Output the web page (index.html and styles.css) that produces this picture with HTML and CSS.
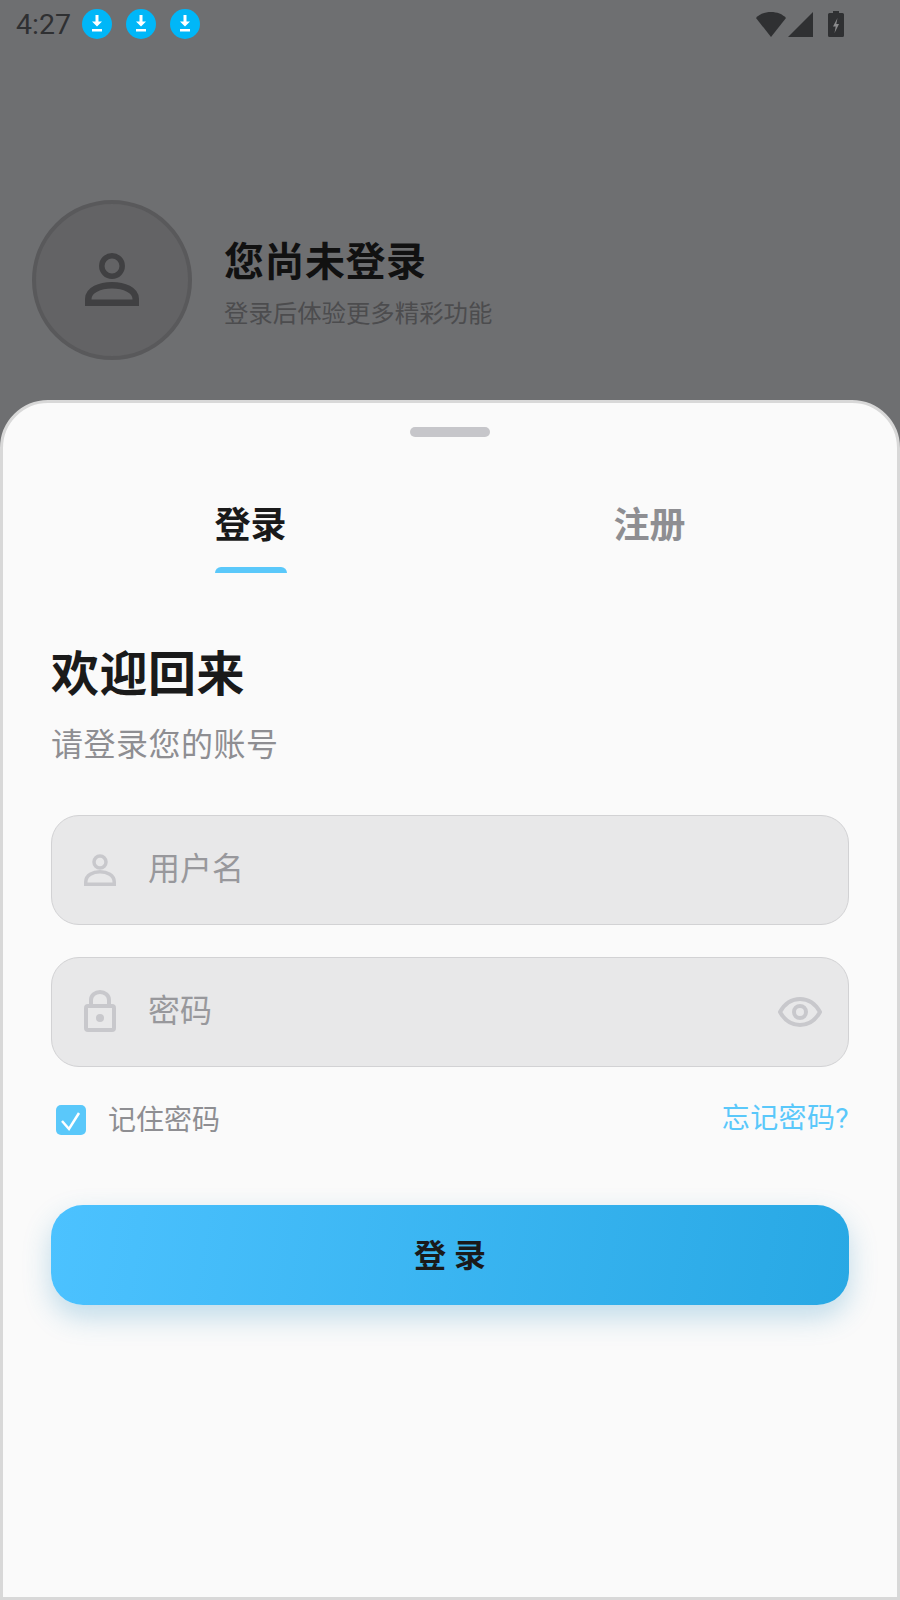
FILE: index.html
```html
<!DOCTYPE html>
<html lang="zh-CN">

<head>
	<meta charset="UTF-8" />
	<meta name="viewport" content="width=device-width, initial-scale=1.0" />
	<title>登录</title>
	<link rel="stylesheet" href="styles.css">
</head>

<body>
	<div class="page">
		<div class="status-bar">
			<span class="time">4:27</span>
			<span class="notice"><svg viewBox="0 0 30 30" width="30" height="30"><path d="M13.500 6h3v6.500H20L15 17.500 10 12.500h3.500z" fill="#fff" /><rect x="10" y="20" width="10" height="2.500" fill="#fff" /></svg></span>
			<span class="notice"><svg viewBox="0 0 30 30" width="30" height="30"><path d="M13.500 6h3v6.500H20L15 17.500 10 12.500h3.500z" fill="#fff" /><rect x="10" y="20" width="10" height="2.500" fill="#fff" /></svg></span>
			<span class="notice"><svg viewBox="0 0 30 30" width="30" height="30"><path d="M13.500 6h3v6.500H20L15 17.500 10 12.500h3.500z" fill="#fff" /><rect x="10" y="20" width="10" height="2.500" fill="#fff" /></svg></span>
			<div class="status-icons">
				<svg viewBox="0 0 30 26" width="30" height="26"><path d="M0 7C3.500 3 9 1 15 1s11.500 2 15 6L15 26z" fill="#2f3032" /></svg>
				<svg class="signal" viewBox="0 0 25 25" width="25" height="25"><path d="M25 0v25H0z" fill="#2f3032" /></svg>
				<svg class="battery" viewBox="0 0 16 26" width="16" height="26"><path d="M5 0h6v2h3.500A1.500 1.500 0 0 1 16 3.500v21a1.500 1.500 0 0 1-1.500 1.500h-13A1.500 1.500 0 0 1 0 24.500v-21A1.500 1.500 0 0 1 1.500 2H5z" fill="#2f3032" /><path d="M9.500 7L5 15.500h2.700L6.500 22 11 13H8.300z" fill="#8a8a8c" /></svg>
			</div>
		</div>

		<div class="profile">
			<div class="avatar">
				<svg viewBox="0 0 54 54" width="54" height="54" fill="none" stroke="#404042" stroke-width="6.500">
					<circle cx="27" cy="13" r="10.200" stroke-width="5.500" />
					<path d="M3.250 49.750V46C3.250 37 15 32.250 27 32.250S50.750 37 50.750 46v3.750z" />
				</svg>
			</div>
			<div class="profile-text">
				<div class="profile-name">您尚未登录</div>
				<div class="profile-hint">登录后体验更多精彩功能</div>
			</div>
		</div>

		<div class="sheet">
			<div class="handle"></div>
			<div class="tabs">
				<div class="tab active">
					<span>登录</span>
					<i class="tab-line"></i>
				</div>
				<div class="tab">
					<span>注册</span>
					<i class="tab-line"></i>
				</div>
			</div>

			<h1 class="welcome">欢迎回来</h1>
			<p class="welcome-sub">请登录您的账号</p>

			<div class="field">
				<svg class="field-icon" viewBox="0 0 32 32" width="32" height="32" fill="none" stroke="#c8c8cc" stroke-width="3.500">
					<circle cx="16" cy="8" r="6" />
					<path d="M1.750 30.250V28C1.750 21 9 17.750 16 17.750S30.250 21 30.250 28v2.250z" />
				</svg>
				<input type="text" placeholder="用户名" />
			</div>

			<div class="field">
				<svg class="field-icon lock" viewBox="0 0 32 42" width="32" height="42" fill="none" stroke="#c8c8cc" stroke-width="4">
					<path d="M7 16V10a9 8 0 0 1 18 0v6" />
					<rect x="2" y="16" width="28" height="24" rx="2" />
					<circle cx="16" cy="28" r="4" fill="#c8c8cc" stroke="none" />
				</svg>
				<input type="password" placeholder="密码" />
				<svg class="eye" viewBox="0 0 44 30" width="44" height="30" fill="none" stroke="#c8c8cc" stroke-width="4">
					<path d="M2 15C7 6 14 2 22 2s15 4 20 13c-5 9-12 13-20 13S7 24 2 15z" />
					<circle cx="22" cy="15" r="6" />
				</svg>
			</div>

			<div class="options">
				<label class="remember">
					<span class="check"><svg viewBox="0 0 30 30" width="30" height="30" fill="none" stroke="#fff" stroke-width="2.500"><path d="M6 16l7 8L23 8" /></svg></span>
					<span class="remember-text">记住密码</span>
				</label>
				<a class="forgot">忘记密码?</a>
			</div>

			<button class="submit">登 录</button>
		</div>
	</div>
</body>

</html>
```

FILE: styles.css
```css
* {
	box-sizing: border-box;
}

body {
	margin: 0;
	font-family: Roboto, 'Noto Sans CJK SC', sans-serif;
	background-color: #6e6f71;
}

.page {
	display: flex;
	flex-direction: column;
	width: 900px;
	height: 1600px;
	overflow: hidden;
}

.status-bar {
	display: flex;
	align-items: center;
	gap: 14px;
	height: 48px;
	padding: 0 56px 0 16px;
}

.time {
	width: 54px;
	margin-right: -2px;
	font-size: 28.5px;
	color: #2f3032;
}

.notice {
	display: block;
	width: 30px;
	height: 30px;
	border-radius: 50%;
	background: #00b7f8;
}

.notice svg {
	display: block;
}

.status-icons {
	display: flex;
	align-items: flex-end;
	margin-left: auto;
}

.signal {
	margin-left: 2px;
}

.battery {
	margin-left: 15px;
}

.profile {
	display: flex;
	align-items: center;
	gap: 32px;
	height: 352px;
	padding: 112px 32px 0;
}

.avatar {
	display: flex;
	align-items: center;
	justify-content: center;
	flex-shrink: 0;
	width: 160px;
	height: 160px;
	border: 4px solid #59595b;
	border-radius: 50%;
	background: #636365;
}

.profile-text {
	padding-top: 7px;
}

.profile-name {
	font-size: 40px;
	font-weight: 700;
	letter-spacing: 0.5px;
	line-height: 56px;
	color: #111;
}

.profile-hint {
	margin-top: 5px;
	font-size: 24.400px;
	line-height: 36px;
	color: #4c4c4e;
}

.sheet {
	flex: 1;
	padding: 0 48px;
	border: 3px solid #d8d8d8;
	border-radius: 48px 48px 0 0;
	background: #fafafa;
}

.handle {
	width: 80px;
	height: 10px;
	margin: 24px auto 0;
	border-radius: 5px;
	background: #c6c6ca;
}

.tabs {
	display: flex;
	margin-top: 63px;
}

.tab {
	display: flex;
	flex: 1;
	flex-direction: column;
	align-items: center;
	gap: 15px;
	font-size: 36px;
	font-weight: 700;
	line-height: 52px;
	color: #8e8e92;
}

.tab-line {
	width: 72px;
	height: 6px;
	border-radius: 6px 6px 0 0;
}

.tab.active {
	color: #1a1a1a;
}

.tab.active .tab-line {
	background: #5ac8fa;
}

.welcome {
	margin: 70px 0 0;
	font-size: 48px;
	font-weight: 700;
	letter-spacing: 0.5px;
	line-height: 64px;
	color: #1a1a1a;
}

.welcome-sub {
	margin: 16px 0 48px;
	font-size: 32px;
	letter-spacing: 0.5px;
	line-height: 44px;
	color: #8e8e92;
}

.field {
	display: flex;
	align-items: center;
	gap: 32px;
	height: 110px;
	margin-bottom: 32px;
	padding: 0 26px 0 32px;
	border: 1px solid #d2d2d4;
	border-radius: 28px;
	background: #e8e8e9;
}

.field-icon {
	flex-shrink: 0;
}

.lock {
	margin-bottom: 2px;
}

.field input {
	flex: 1;
	min-width: 0;
	padding: 0 0 2px;
	border: none;
	outline: none;
	background: none;
	font-family: inherit;
	font-size: 32px;
}

.field input::placeholder {
	color: #98989c;
	opacity: 1;
}

.options {
	display: flex;
	align-items: center;
	justify-content: space-between;
	height: 40px;
	margin-top: 33px;
}

.remember {
	display: flex;
	align-items: center;
	gap: 22px;
	padding-left: 5px;
	font-size: 28px;
	color: #8e8e92;
}

.remember-text {
	padding-bottom: 4px;
}

.check {
	display: block;
	width: 30px;
	height: 30px;
	border-radius: 5px;
	background: #5ac8fa;
}

.check svg {
	display: block;
}

.forgot {
	padding-bottom: 8px;
	font-size: 28px;
	letter-spacing: 0.4px;
	color: #5ac8fa;
}

.submit {
	display: block;
	width: 100%;
	height: 100px;
	margin-top: 65px;
	padding: 0 0 4px;
	border: none;
	border-radius: 32px;
	background: linear-gradient(100deg, #4cc2ff, #28a8e4);
	box-shadow: 0 12px 28px rgba(40, 140, 190, 0.28);
	font-family: inherit;
	font-size: 32px;
	font-weight: 700;
	color: #1a1a1a;
}
```
